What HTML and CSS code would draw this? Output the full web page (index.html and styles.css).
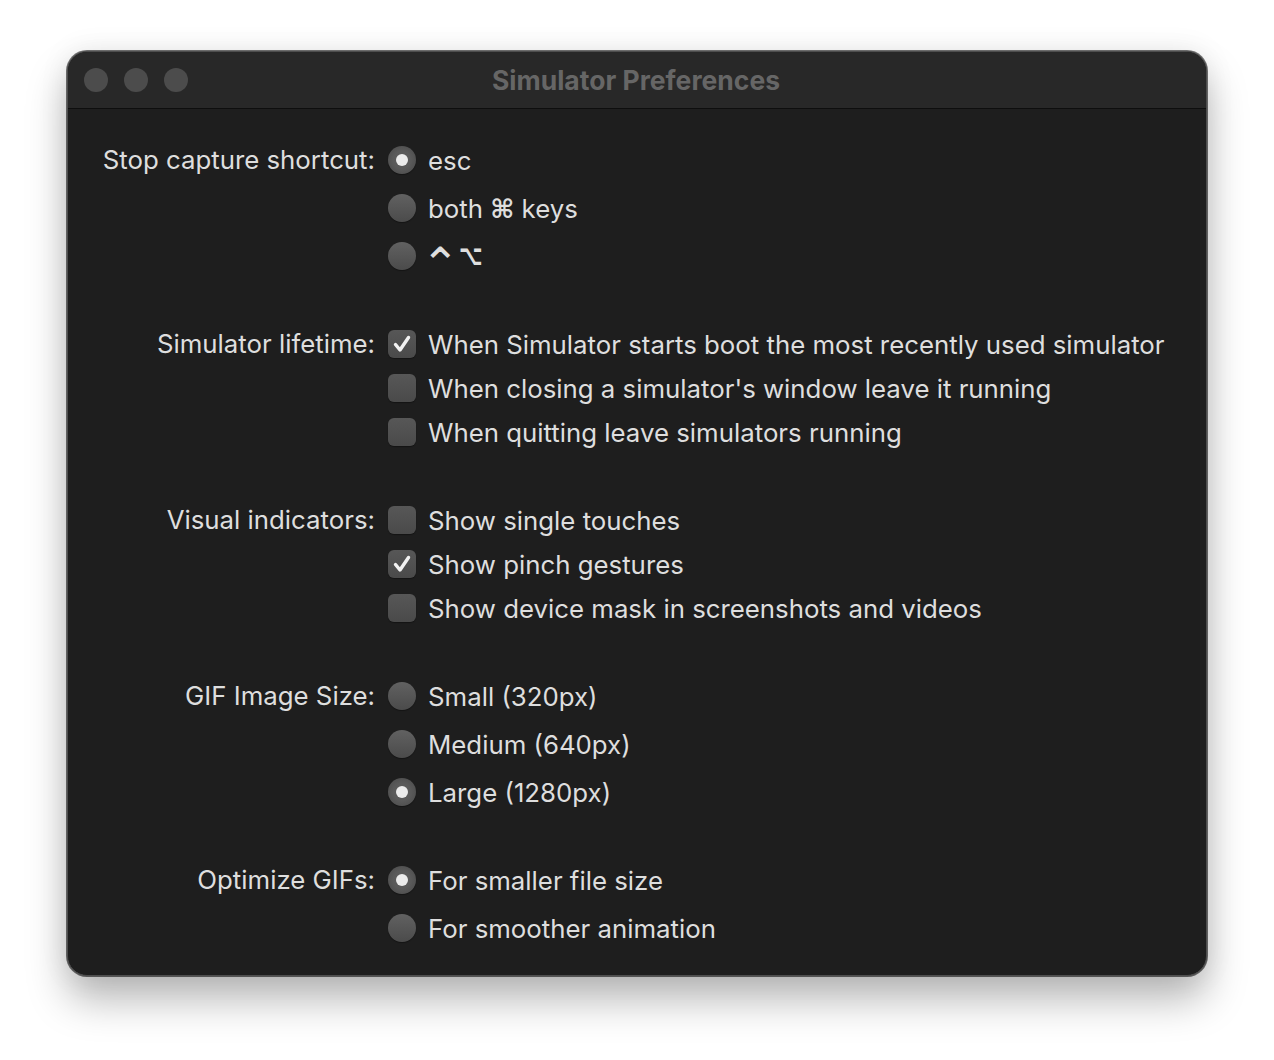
FILE: index.html
```html
<!DOCTYPE html>
<html>
<head>
<meta charset="utf-8">
<title>Simulator Preferences</title>
<link rel="stylesheet" href="styles.css">
</head>
<body>
<div class="window">
  <div class="titlebar">
    <div class="lights"><span class="light"></span><span class="light"></span><span class="light"></span></div>
    <div class="title">Simulator Preferences</div>
  </div>
  <div class="content">
    <div class="group radios">
      <div class="label">Stop capture shortcut:</div>
      <div class="options">
        <div class="row"><span class="radio on"></span><span class="text">esc</span></div>
        <div class="row"><span class="radio"></span><span class="text">both <span class="sym">⌘</span> keys</span></div>
        <div class="row"><span class="radio"></span><span class="text keys"><span class="caret">⌃</span><span class="opt">⌥</span></span></div>
      </div>
    </div>
    <div class="group checks">
      <div class="label">Simulator lifetime:</div>
      <div class="options">
        <div class="row"><span class="check on"><svg viewBox="0 0 28 28"><path d="M7.5 14.5 L12 20 L20.5 7.5"/></svg></span><span class="text">When Simulator starts boot the most recently used simulator</span></div>
        <div class="row"><span class="check"></span><span class="text">When closing a simulator's window leave it running</span></div>
        <div class="row"><span class="check"></span><span class="text">When quitting leave simulators running</span></div>
      </div>
    </div>
    <div class="group checks wide-gap">
      <div class="label">Visual indicators:</div>
      <div class="options">
        <div class="row"><span class="check"></span><span class="text">Show single touches</span></div>
        <div class="row"><span class="check on"><svg viewBox="0 0 28 28"><path d="M7.5 14.5 L12 20 L20.5 7.5"/></svg></span><span class="text">Show pinch gestures</span></div>
        <div class="row"><span class="check"></span><span class="text">Show device mask in screenshots and videos</span></div>
      </div>
    </div>
    <div class="group radios">
      <div class="label">GIF Image Size:</div>
      <div class="options">
        <div class="row"><span class="radio"></span><span class="text">Small (320px)</span></div>
        <div class="row"><span class="radio"></span><span class="text">Medium (640px)</span></div>
        <div class="row"><span class="radio on"></span><span class="text">Large (1280px)</span></div>
      </div>
    </div>
    <div class="group radios narrow-gap">
      <div class="label">Optimize GIFs:</div>
      <div class="options">
        <div class="row"><span class="radio on"></span><span class="text">For smaller file size</span></div>
        <div class="row"><span class="radio"></span><span class="text">For smoother animation</span></div>
      </div>
    </div>
  </div>
</div>
</body>
</html>
```

FILE: styles.css
```css
html, body {
  margin: 0;
  padding: 0;
  background: #ffffff;
}
body {
  width: 1274px;
  height: 1060px;
  overflow: hidden;
  font-family: Inter, "Noto Sans", "DejaVu Sans", sans-serif;
}
.window {
  margin: 51px 0 0 67px;
  width: 1138px;
  height: 923px;
  border: 1px solid #4e4e4e;
  border-radius: 20px;
  background: #1e1e1e;
  overflow: hidden;
  box-shadow: 0 0 0 1px rgba(0,0,0,0.55), 0 24px 40px rgba(0,0,0,0.28), 0 0 30px rgba(0,0,0,0.08);
}
.titlebar {
  height: 56px;
  background: #282828;
  border-bottom: 1px solid #0e0e0e;
  display: flex;
  align-items: center;
  position: relative;
}
.lights {
  display: flex;
  gap: 16px;
  padding-left: 16px;
}
.light {
  width: 24px;
  height: 24px;
  border-radius: 50%;
  background: #4c4c4c;
}
.title {
  position: absolute;
  left: 0;
  right: 0;
  top: 0;
  bottom: 0;
  display: flex;
  align-items: center;
  justify-content: center;
  font-weight: 700;
  font-size: 26.5px;
  color: #666666;
  padding-right: 2px;
}
.content {
  padding-top: 27px;
  display: flex;
  flex-direction: column;
  gap: 42px;
}
.wide-gap { margin-top: 2px; }
.narrow-gap { margin-top: -2px; }
.group {
  display: grid;
  grid-template-columns: 307px 1fr;
  column-gap: 13px;
}
.label {
  text-align: right;
  font-size: 25.8px;
  color: #dedede;
  line-height: 48px;
}
.checks .label { line-height: 44px; }
.options {
  display: flex;
  flex-direction: column;
}
.row {
  display: flex;
  align-items: center;
  gap: 12px;
  height: 48px;
}
.checks .row { height: 44px; }
.text {
  font-size: 25.8px;
  color: #dedede;
  white-space: nowrap;
}
.sym {
  font-family: "DejaVu Sans", sans-serif;
  font-size: 26px;
  font-weight: 700;
}
.keys {
  display: flex;
  align-items: center;
  gap: 1px;
  font-family: "DejaVu Sans", sans-serif;
  font-weight: 700;
}
.caret {
  font-size: 46px;
  font-weight: 400;
  line-height: 1;
  margin-left: -7px;
  margin-right: -2px;
  transform: translateY(7.5px);
}
.opt {
  font-size: 25px;
  line-height: 1;
  transform-origin: left center;
  transform: translateY(-1px) scale(0.82, 1.15);
}
.radio {
  width: 28px;
  height: 28px;
  border-radius: 50%;
  box-sizing: border-box;
  background: linear-gradient(#616161, #4b4b4b);
  box-shadow: 0 1px 1px rgba(0,0,0,0.35);
  display: flex;
  align-items: center;
  justify-content: center;
}
.radio.on {
  background: radial-gradient(circle, #5e5e5e 0, #5a5a5a 45%, #474747 100%);
}
.radio.on::after {
  content: "";
  width: 12px;
  height: 12px;
  border-radius: 50%;
  background: #ececec;
}
.check {
  width: 28px;
  height: 28px;
  box-sizing: border-box;
  border-radius: 6px;
  background: linear-gradient(#575757, #4a4a4a);
  box-shadow: 0 1px 1px rgba(0,0,0,0.35);
  display: flex;
}
.check svg {
  width: 28px;
  height: 28px;
}
.check svg path {
  fill: none;
  stroke: #f2f2f2;
  stroke-width: 3.4;
  stroke-linecap: round;
  stroke-linejoin: round;
}
```
